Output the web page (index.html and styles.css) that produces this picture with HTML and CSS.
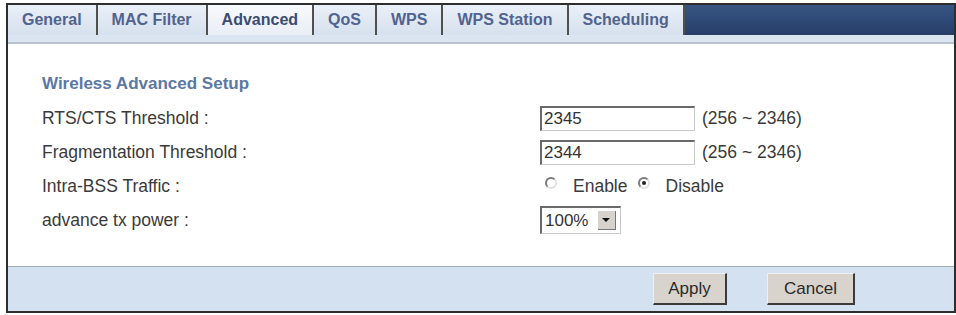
FILE: index.html
```html
<!DOCTYPE html>
<html lang="en">
<head>
    <meta charset="UTF-8">
    <title>Wireless LAN - Advanced</title>
    <link rel="stylesheet" href="styles.css">
</head>
<body>
    <div class="panel">
        <ul class="tabs">
            <li>General</li>
            <li>MAC Filter</li>
            <li class="active">Advanced</li>
            <li>QoS</li>
            <li>WPS</li>
            <li>WPS Station</li>
            <li>Scheduling</li>
            <li class="tabs-fill"></li>
        </ul>
        <div class="tab-strip"></div>

        <div class="content">
            <h3 class="section-title">Wireless Advanced Setup</h3>
            <div class="row">
                <label>RTS/CTS Threshold :</label>
                <div class="field">
                    <input type="text" class="text-box" value="2345">
                    <span class="range">(256 ~ 2346)</span>
                </div>
            </div>
            <div class="row">
                <label>Fragmentation Threshold :</label>
                <div class="field">
                    <input type="text" class="text-box" value="2344">
                    <span class="range">(256 ~ 2346)</span>
                </div>
            </div>
            <div class="row">
                <label>Intra-BSS Traffic :</label>
                <div class="field">
                    <span class="radio"></span>
                    <span class="radio-text">Enable</span>
                    <span class="radio checked"></span>
                    <span class="radio-text">Disable</span>
                </div>
            </div>
            <div class="row">
                <label>advance tx power :</label>
                <div class="field">
                    <div class="select-box">
                        <span class="select-value">100%</span>
                        <span class="select-arrow"></span>
                    </div>
                </div>
            </div>
        </div>

        <div class="footer">
            <button class="btn btn-apply">Apply</button>
            <button class="btn btn-cancel">Cancel</button>
        </div>
    </div>
</body>
</html>
```

FILE: styles.css
```css
body {
    margin: 0;
    padding: 3px 0 0 6px;
    font-family: "Liberation Sans", Arial, sans-serif;
    background-color: #ffffff;
    color: #333333;
}
.panel {
    width: 950px;
    box-sizing: border-box;
    border: 2px solid #2e2e2e;
    background: #ffffff;
}
.tabs {
    display: flex;
    margin: 0;
    padding: 0;
    list-style: none;
    height: 30px;
}
.tabs li {
    padding: 0 14px;
    line-height: 30px;
    font-size: 16px;
    font-weight: bold;
    color: #51638e;
    background: linear-gradient(#eaf0f8, #d6e0ee);
    border-right: 2px solid #4f4f4f;
    white-space: nowrap;
}
.tabs li.active {
    background: linear-gradient(#f7f9fc, #e9eef6);
    color: #3c4c72;
}
.tabs li.tabs-fill {
    flex: 1;
    padding: 0;
    border-right: none;
    background: linear-gradient(#365482, #273f69);
}
.tab-strip {
    height: 7px;
    background: #dbe5f2;
    border-bottom: 2px solid #b9c3ce;
}
.content {
    padding: 23px 0 29px 34px;
}
.section-title {
    margin: 0;
    height: 34px;
    line-height: 34px;
    font-size: 17px;
    font-weight: bold;
    color: #5b78a6;
}
.row {
    display: flex;
    align-items: center;
    height: 34px;
}
.row label {
    width: 498px;
    font-size: 17.5px;
    color: #3a3a3a;
}
.field {
    display: flex;
    align-items: center;
    font-size: 17.5px;
}
.text-box {
    width: 155px;
    height: 25px;
    box-sizing: border-box;
    margin: 0;
    padding: 0 2px;
    border: 1px solid #c9c9c9;
    border-top: 2px solid #6a6a6a;
    border-left: 2px solid #6a6a6a;
    font-family: "Liberation Sans", Arial, sans-serif;
    font-size: 17px;
    color: #333333;
}
.range {
    margin-left: 7px;
    color: #3a3a3a;
}
.radio {
    display: inline-block;
    width: 12px;
    height: 12px;
    box-sizing: border-box;
    border: 2px solid;
    border-color: #7a7a7a #e2e2e2 #e2e2e2 #7a7a7a;
    border-radius: 50%;
    position: relative;
    margin: 0 16px 6px 5px;
}
.radio.checked {
    margin-left: 10px;
}
.radio.checked::after {
    content: "";
    position: absolute;
    left: 2px;
    top: 2px;
    width: 4px;
    height: 4px;
    border-radius: 50%;
    background: #222222;
}
.radio-text {
    color: #3a3a3a;
}
.select-box {
    display: flex;
    align-items: center;
    width: 81px;
    height: 28px;
    box-sizing: border-box;
    border: 1px solid #c9c9c9;
    border-top: 2px solid #6a6a6a;
    border-left: 2px solid #6a6a6a;
    padding: 0 4px 0 3px;
    background: #ffffff;
}
.select-value {
    flex: 1;
    font-size: 17px;
    color: #333333;
}
.select-arrow {
    position: relative;
    width: 17px;
    height: 18px;
    background: #d6d3ce;
    border-right: 1px solid #777777;
    border-bottom: 1px solid #777777;
}
.select-arrow::after {
    content: "";
    position: absolute;
    left: 4px;
    top: 7px;
    border-left: 4px solid transparent;
    border-right: 4px solid transparent;
    border-top: 4px solid #111111;
}
.footer {
    display: flex;
    justify-content: flex-end;
    align-items: center;
    gap: 40px;
    height: 44px;
    padding-right: 99px;
    background: #d4e1f0;
    border-top: 1px solid #9eabb9;
}
.btn {
    height: 32px;
    box-sizing: border-box;
    padding: 0;
    background: #d8d4cd;
    border: 1px solid #f0f0f0;
    border-right: 2px solid #3a3a3a;
    border-bottom: 2px solid #3a3a3a;
    font-family: "Liberation Sans", Arial, sans-serif;
    font-size: 17px;
    color: #2a2a2a;
    cursor: pointer;
}
.btn-apply {
    width: 74px;
}
.btn-cancel {
    width: 88px;
}
```
